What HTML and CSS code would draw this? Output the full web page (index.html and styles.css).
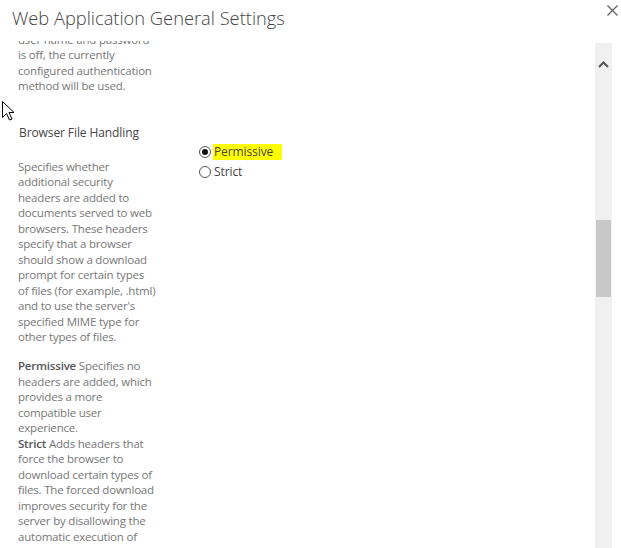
FILE: index.html
```html
<!DOCTYPE html>
<html lang="en">
<head>
<meta charset="utf-8">
<title>Web Application General Settings</title>
<link rel="stylesheet" href="styles.css">
</head>
<body>
<div class="dialog">
  <header class="titlebar">
    <h1 class="title">Web Application General Settings</h1>
    <button class="close" aria-label="Close">
      <svg width="11" height="11" viewBox="0 0 11 11"><path d="M0.5 0.5 L10.5 10.5 M10.5 0.5 L0.5 10.5" stroke="#666" stroke-width="1.4" fill="none"/></svg>
    </button>
  </header>
  <div class="body">
    <div class="viewport">
      <div class="content">
        <section class="section first">
          <div class="left">
            <p class="desc">user name and password<br>is off, the currently<br>configured authentication<br>method will be used.</p>
          </div>
        </section>
        <section class="section">
          <div class="left">
            <h3 class="section-title">Browser File Handling</h3>
            <p class="desc">Specifies whether<br>additional security<br>headers are added to<br>documents served to web<br>browsers. These headers<br>specify that a browser<br>should show a download<br>prompt for certain types<br>of files (for example, .html)<br>and to use the server's<br>specified MIME type for<br>other types of files.</p>
            <p class="desc gap"><b>Permissive</b> Specifies no<br>headers are added, which<br>provides a more<br>compatible user<br>experience.<br><b>Strict</b> Adds headers that<br>force the browser to<br>download certain types of<br>files. The forced download<br>improves security for the<br>server by disallowing the<br>automatic execution of</p>
          </div>
          <div class="right">
            <label class="option"><input type="radio" name="bfh" checked><span class="hl">Permissive</span></label>
            <label class="option"><input type="radio" name="bfh"><span>Strict</span></label>
          </div>
        </section>
      </div>
    </div>
    <div class="scrollbar">
      <div class="arrow">
        <svg width="11" height="7" viewBox="0 0 11 7"><path d="M1 6 L5.5 1.5 L10 6" stroke="#555" stroke-width="2" fill="none"/></svg>
      </div>
      <div class="track"><div class="thumb"></div></div>
    </div>
  </div>
  <svg class="cursor" width="13" height="20" viewBox="0 0 13 20"><path d="M0.5 0.5 L0.5 16.5 L4.5 12.5 L7.5 19 L10 18 L7 11.5 L12 11.5 Z" fill="#fff" stroke="#000" stroke-width="1"/></svg>
</div>
</body>
</html>
```
FILE: styles.css
```css
html, body {
  margin: 0;
  padding: 0;
  background: #fff;
}
body {
  font-family: "Open Sans", "Liberation Sans", sans-serif;
  color: #444;
  width: 621px;
  height: 548px;
  overflow: hidden;
}
.dialog {
  position: relative;
  display: flex;
  flex-direction: column;
  height: 548px;
}
.titlebar {
  display: flex;
  justify-content: space-between;
  align-items: flex-start;
  height: 41px;
  flex: none;
}
.title {
  margin: 5px 0 0 12px;
  font-size: 18.3px;
  font-weight: 300;
  color: #444;
  line-height: 26px;
}
.close {
  border: 0;
  background: none;
  padding: 0;
  margin: 5px 3px 0 0;
  width: 11px;
  height: 11px;
  display: block;
}
.close svg { display: block; }
.body {
  flex: 1;
  display: flex;
  min-height: 0;
}
.viewport {
  flex: 1;
  overflow: hidden;
}
.content {
  margin-top: -9.5px;
  padding-left: 18px;
}
.section {
  display: flex;
}
.left {
  width: 160px;
}
.right {
  padding-left: 21px;
  padding-top: 19px;
  display: flex;
  flex-direction: column;
  gap: 4px;
}
.desc {
  margin: 0;
  font-size: 11.5px;
  letter-spacing: -0.2px;
  line-height: 15.5px;
  color: #777;
  white-space: nowrap;
}
.desc b {
  font-weight: 600;
  color: #555;
}
.desc.gap {
  margin-top: 13.5px;
}
.section.first .desc {
  margin-bottom: 31px;
}
.section-title {
  margin: 0 0 18px 1px;
  font-size: 12px;
  letter-spacing: -0.1px;
  font-weight: 400;
  line-height: 16px;
  color: #444;
}
.option {
  display: flex;
  align-items: center;
  font-size: 12px;
  letter-spacing: -0.1px;
  line-height: 16px;
  color: #444;
}
.option input {
  appearance: none;
  -webkit-appearance: none;
  margin: 0 2px 0 0;
  width: 12px;
  height: 12px;
  border: 1px solid #555;
  border-radius: 50%;
  box-sizing: border-box;
  background: #fff;
  display: grid;
  place-items: center;
}
.option input:checked::after {
  content: "";
  width: 6px;
  height: 6px;
  border-radius: 50%;
  background: #111;
}
.hl {
  background: #ffff00;
  padding: 0 9px 0 1px;
}
.option span:not(.hl) {
  padding-left: 1px;
}
.scrollbar {
  width: 17px;
  margin: 2px 9px 0 0;
  background: #f0f0f0;
  display: flex;
  flex-direction: column;
}
.arrow {
  height: 34px;
  display: flex;
  justify-content: center;
  align-items: center;
  padding-top: 8px;
  box-sizing: border-box;
}
.arrow svg { display: block; }
.track {
  padding: 143px 1px 0;
}
.thumb {
  height: 77px;
  background: #c8c8c8;
}
.cursor {
  position: absolute;
  left: 2px;
  top: 101px;
}
```
